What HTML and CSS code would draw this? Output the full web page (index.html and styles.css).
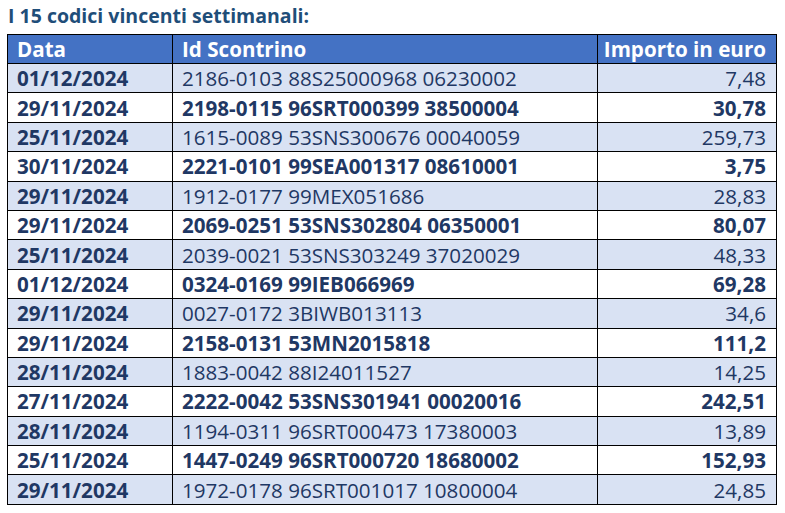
FILE: index.html
```html
<!DOCTYPE html>
<html lang="it">
<head>
<meta charset="utf-8">
<link rel="stylesheet" href="styles.css">
</head>
<body>
<h1 class="title">I 15 codici vincenti settimanali:</h1>
<table class="codes">
  <colgroup>
    <col class="c-date">
    <col class="c-id">
    <col class="c-amt">
  </colgroup>
  <thead>
    <tr><th>Data</th><th>Id Scontrino</th><th class="num">Importo in euro</th></tr>
  </thead>
  <tbody>
    <tr class="band"><td class="date">01/12/2024</td><td>2186-0103 88S25000968 06230002</td><td class="num">7,48</td></tr>
    <tr class="strong"><td class="date">29/11/2024</td><td>2198-0115 96SRT000399 38500004</td><td class="num">30,78</td></tr>
    <tr class="band"><td class="date">25/11/2024</td><td>1615-0089 53SNS300676 00040059</td><td class="num">259,73</td></tr>
    <tr class="strong"><td class="date">30/11/2024</td><td>2221-0101 99SEA001317 08610001</td><td class="num">3,75</td></tr>
    <tr class="band"><td class="date">29/11/2024</td><td>1912-0177 99MEX051686</td><td class="num">28,83</td></tr>
    <tr class="strong"><td class="date">29/11/2024</td><td>2069-0251 53SNS302804 06350001</td><td class="num">80,07</td></tr>
    <tr class="band"><td class="date">25/11/2024</td><td>2039-0021 53SNS303249 37020029</td><td class="num">48,33</td></tr>
    <tr class="strong"><td class="date">01/12/2024</td><td>0324-0169 99IEB066969</td><td class="num">69,28</td></tr>
    <tr class="band"><td class="date">29/11/2024</td><td>0027-0172 3BIWB013113</td><td class="num">34,6</td></tr>
    <tr class="strong"><td class="date">29/11/2024</td><td>2158-0131 53MN2015818</td><td class="num">111,2</td></tr>
    <tr class="band"><td class="date">28/11/2024</td><td>1883-0042 88I24011527</td><td class="num">14,25</td></tr>
    <tr class="strong"><td class="date">27/11/2024</td><td>2222-0042 53SNS301941 00020016</td><td class="num">242,51</td></tr>
    <tr class="band"><td class="date">28/11/2024</td><td>1194-0311 96SRT000473 17380003</td><td class="num">13,89</td></tr>
    <tr class="strong"><td class="date">25/11/2024</td><td>1447-0249 96SRT000720 18680002</td><td class="num">152,93</td></tr>
    <tr class="band"><td class="date">29/11/2024</td><td>1972-0178 96SRT001017 10800004</td><td class="num">24,85</td></tr>
  </tbody>
</table>
</body>
</html>
```
FILE: styles.css
```css
html, body {
  margin: 0;
  padding: 0;
  background: #ffffff;
}
body {
  padding: 4px 0 0 7px;
  font-family: "Open Sans", "Noto Sans", sans-serif;
  color: #1f3864;
}
.title {
  margin: 0 0 0 1px;
  font-size: 19.5px;
  line-height: 24px;
  font-weight: 700;
  color: #1f4e79;
  height: 30px;
}
.codes {
  border-collapse: collapse;
  width: 769px;
  table-layout: fixed;
  font-size: 20.6px;
}
.c-date { width: 165px; }
.c-id { width: 425px; }
.c-amt { width: 179px; }
.codes th, .codes td {
  border: 1px solid #000;
  padding: 0 0 0 9px;
  height: 28.4px;
  line-height: 26px;
  text-align: left;
  white-space: nowrap;
  vertical-align: middle;
}
.codes th {
  background: #4472c4;
  color: #fff;
  font-weight: 700;
  height: 28px;
}
.codes .num {
  text-align: right;
  padding: 0 10px 0 0;
}
.codes td.date { font-weight: 700; }
.band td { background: #d9e2f3; }
.strong td { font-weight: 700; }
```
